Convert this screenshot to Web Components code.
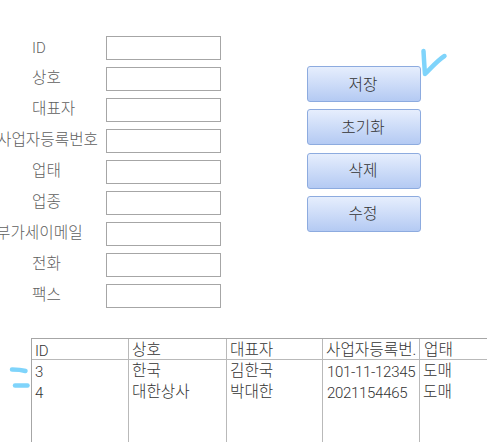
<!DOCTYPE html>
<html lang="ko">
<head>
<meta charset="utf-8">
<title>거래처 관리</title>
<style>
  html, body { margin: 0; height: 100%; background: #fff; overflow: hidden; }
  body { font-family: Roboto, "Noto Sans CJK KR", sans-serif; font-weight: 300; }
</style>
</head>
<body>
<customer-app></customer-app>

<script>
class FormField extends HTMLElement {
  connectedCallback() {
    this.attachShadow({ mode: 'open' });
    const pull = Number(this.getAttribute('pull') || 0);
    this.shadowRoot.innerHTML = `
      <style>
        :host { display: flex; align-items: center; height: 24px; }
        .label {
          width: ${74 + pull}px;
          margin-left: ${-pull}px;
          flex: none;
          white-space: nowrap;
          font-size: 15.7px;
          line-height: 24px;
          color: #5f5f5f;
          position: relative;
          top: -1px;
        }
        .box {
          width: 115px;
          height: 24px;
          box-sizing: border-box;
          border: 1px solid #a6a6a6;
          background: #fff;
        }
      </style>
      <span class="label"><slot></slot></span>
      <div class="box"></div>
    `;
  }
}
customElements.define('form-field', FormField);

class ActionButton extends HTMLElement {
  connectedCallback() {
    this.attachShadow({ mode: 'open' });
    this.shadowRoot.innerHTML = `
      <style>
        :host {
          display: flex;
          align-items: center;
          justify-content: center;
          width: 114px;
          height: 36px;
          box-sizing: border-box;
          border: 1px solid #8dabdf;
          border-radius: 3px;
          background: linear-gradient(#e6eefd, #b4caf3);
          font-size: 15.7px;
          color: #333;
        }
        span { position: relative; top: -1px; left: -1px; }
      </style>
      <span><slot></slot></span>
    `;
  }
}
customElements.define('action-button', ActionButton);

class DataTable extends HTMLElement {
  connectedCallback() {
    this.attachShadow({ mode: 'open' });
    const head = ['ID', '상호', '대표자', '사업자등록번.', '업태'];
    const rows = [
      ['3', '한국', '김한국', '101-11-12345', '도매'],
      ['4', '대한상사', '박대한', '2021154465', '도매']
    ];
    const cells = r => r.map(t => {
      const en = /^[A-Z0-9-]+$/.test(t);
      return `<div class="cell"><span class="${en ? 'en' : ''}">${t}</span></div>`;
    }).join('');
    this.shadowRoot.innerHTML = `
      <style>
        :host {
          display: block;
          height: 104px;
          box-sizing: border-box;
          border-top: 1px solid #a6a6a6;
          border-left: 1px solid #a6a6a6;
          overflow: hidden;
          font-size: 15.7px;
          color: #333;
        }
        .grid {
          display: grid;
          grid-template-columns: 97px 98px 96px 97px 97px;
          grid-auto-rows: 21px;
          height: 100%;
          position: relative;
        }
        .cell {
          padding-left: 3px;
          line-height: 21px;
          white-space: nowrap;
          overflow: hidden;
        }
        .cell:nth-child(5n) { padding-left: 4px; }
        .en { font-size: 15px; letter-spacing: -0.3px; position: relative; top: 1px; }
        .head { display: contents; }
        .head .cell { height: 20px; line-height: 22px; border-bottom: 1px solid #b9b9b9; }
        .rule { position: absolute; top: 0; bottom: 0; width: 1px; background: #b9b9b9; }
      </style>
      <div class="grid">
        <div class="head">${cells(head)}</div>
        ${rows.map(cells).join('')}
        <i class="rule" style="left:96px"></i>
        <i class="rule" style="left:194px"></i>
        <i class="rule" style="left:290px"></i>
        <i class="rule" style="left:387px"></i>
      </div>
    `;
  }
}
customElements.define('data-table', DataTable);

class CustomerApp extends HTMLElement {
  connectedCallback() {
    this.attachShadow({ mode: 'open' });
    this.shadowRoot.innerHTML = `
      <style>
        :host { display: block; position: relative; width: 487px; height: 442px; overflow: hidden; }
        .top {
          display: flex;
          padding: 36px 0 0 32px;
          height: 338px;
          box-sizing: border-box;
        }
        .fields { display: flex; flex-direction: column; gap: 7px; width: 275px; }
        .actions { display: flex; flex-direction: column; gap: 7.33px; padding-top: 30px; }
        .bottom { padding-left: 31px; }
        .en { font-size: 15px; position: relative; top: 1px; }
        svg { position: absolute; left: 0; top: 0; pointer-events: none; }
      </style>
      <div class="top">
        <div class="fields">
          <form-field><span class="en">ID</span></form-field>
          <form-field>상호</form-field>
          <form-field>대표자</form-field>
          <form-field pull="35">사업자등록번호</form-field>
          <form-field>업태</form-field>
          <form-field>업종</form-field>
          <form-field pull="36">부가세이메일</form-field>
          <form-field>전화</form-field>
          <form-field>팩스</form-field>
        </div>
        <div class="actions">
          <action-button>저장</action-button>
          <action-button>초기화</action-button>
          <action-button>삭제</action-button>
          <action-button>수정</action-button>
        </div>
      </div>
      <div class="bottom"><data-table></data-table></div>
      <!-- hand drawn marks on top of the shot -->
      <svg width="487" height="442" fill="none" stroke="#7fd4fb" stroke-width="4.5" stroke-linecap="round" stroke-linejoin="round">
        <path d="M423.5 51 C424 60 424.5 68 425 74 C431 68 438 60 444.5 56"/>
        <path d="M12 369.5 C17 369.5 22 370 25.5 371"/>
        <path d="M15 385.5 L27.5 385.5"/>
      </svg>
    `;
  }
}
customElements.define('customer-app', CustomerApp);
</script>
</body>
</html>
